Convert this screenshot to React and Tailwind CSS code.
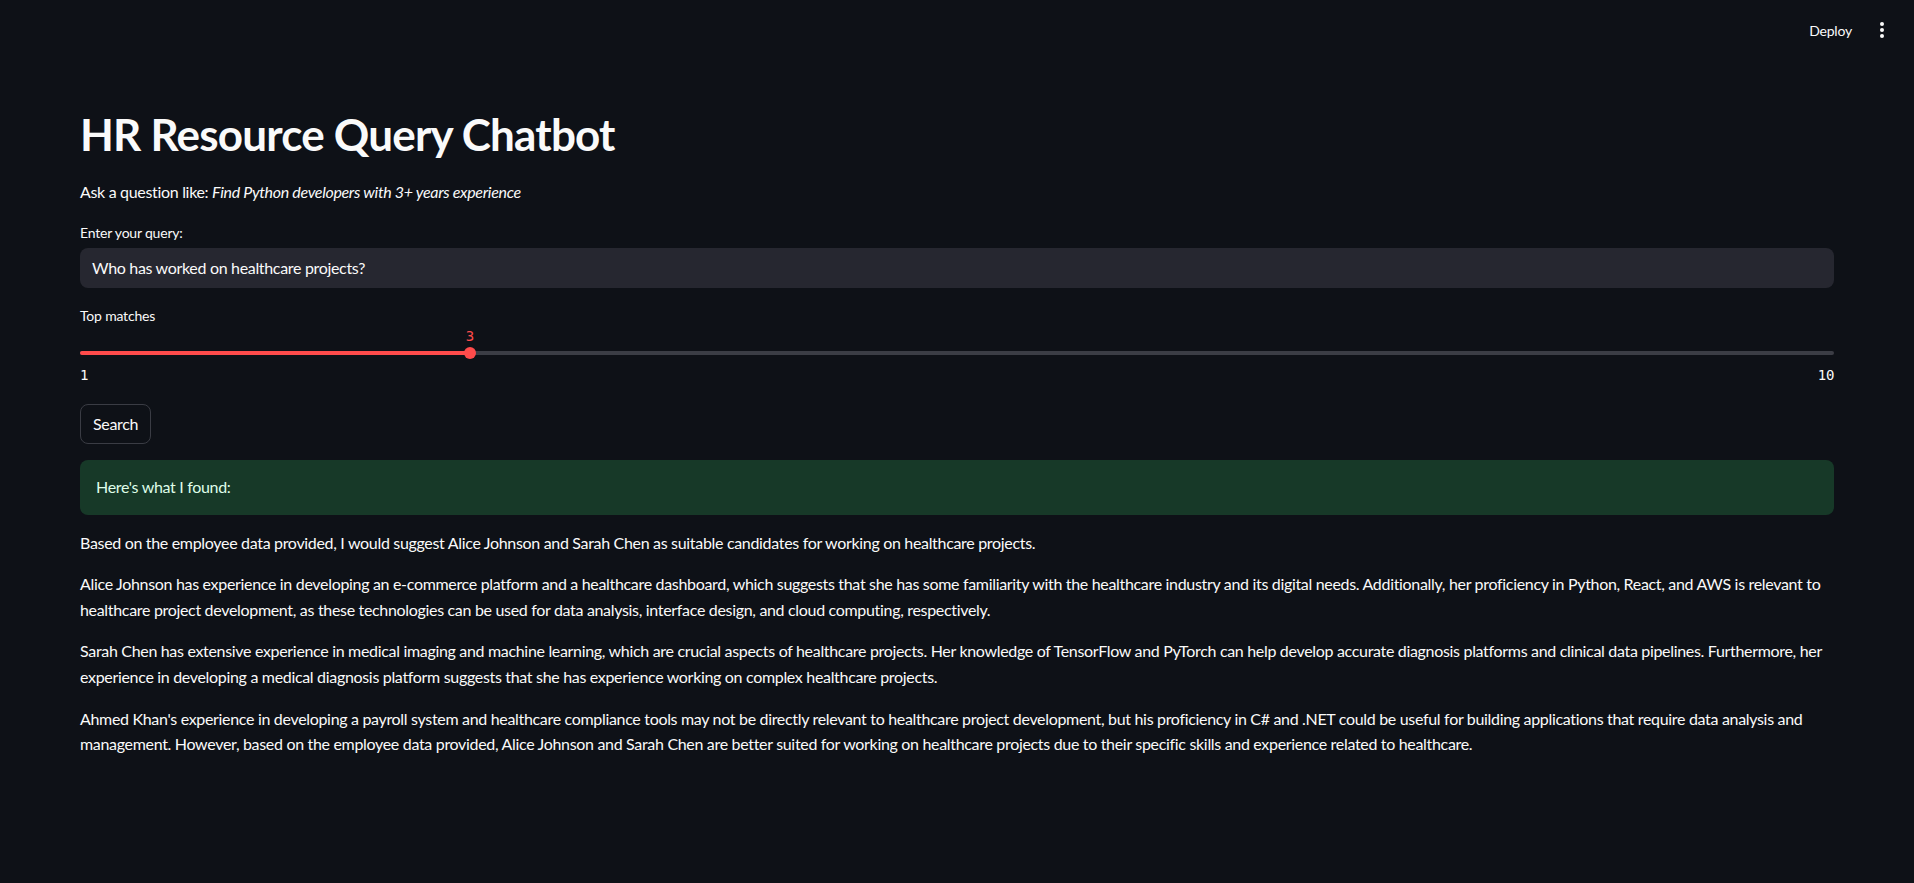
import React from "react";

const paragraphs = [
  "Based on the employee data provided, I would suggest Alice Johnson and Sarah Chen as suitable candidates for working on healthcare projects.",
  "Alice Johnson has experience in developing an e-commerce platform and a healthcare dashboard, which suggests that she has some familiarity with the healthcare industry and its digital needs. Additionally, her proficiency in Python, React, and AWS is relevant to healthcare project development, as these technologies can be used for data analysis, interface design, and cloud computing, respectively.",
  "Sarah Chen has extensive experience in medical imaging and machine learning, which are crucial aspects of healthcare projects. Her knowledge of TensorFlow and PyTorch can help develop accurate diagnosis platforms and clinical data pipelines. Furthermore, her experience in developing a medical diagnosis platform suggests that she has experience working on complex healthcare projects.",
  "Ahmed Khan's experience in developing a payroll system and healthcare compliance tools may not be directly relevant to healthcare project development, but his proficiency in C# and .NET could be useful for building applications that require data analysis and management. However, based on the employee data provided, Alice Johnson and Sarah Chen are better suited for working on healthcare projects due to their specific skills and experience related to healthcare.",
];

function Slider({ min, max, value }) {
  const pct = ((value - min) / (max - min)) * 100;
  return (
    <div>
      <div className="relative h-[21px]">
        <span
          className="absolute top-0 -translate-x-1/2 text-[14px] leading-[21px] text-[#ff4b4b] font-['DejaVu_Sans_Mono',monospace]"
          style={{ left: `${pct}%` }}
        >
          {value}
        </span>
      </div>
      <div className="relative h-[12px] flex items-center">
        <div className="w-full h-[4px] rounded-full bg-[#3b3d45]" />
        <div
          className="absolute left-0 h-[4px] rounded-full bg-[#ff4b4b]"
          style={{ width: `${pct}%` }}
        />
        <div
          className="absolute w-[12px] h-[12px] -translate-x-1/2 rounded-full bg-[#ff4b4b]"
          style={{ left: `${pct}%` }}
        />
      </div>
      <div className="flex justify-between mt-[6px] text-[14px] leading-[21px] text-[#fafafa] font-['DejaVu_Sans_Mono',monospace]">
        <span>{min}</span>
        <span>{max}</span>
      </div>
    </div>
  );
}

export default function App() {
  return (
    <div className="min-h-screen bg-[#0e1117] text-[#fafafa] font-['Lato',sans-serif] tracking-[-0.32px]">
      <header className="h-[60px] flex items-center justify-end pr-[24px] gap-[14px]">
        <button className="text-[14px] text-[#fafafa] px-[8px] tracking-[-0.2px]">Deploy</button>
        <div className="flex flex-col gap-[2px] items-center w-[16px]">
          <span className="w-[4px] h-[4px] rounded-full bg-[#fafafa]" />
          <span className="w-[4px] h-[4px] rounded-full bg-[#fafafa]" />
          <span className="w-[4px] h-[4px] rounded-full bg-[#fafafa]" />
        </div>
      </header>

      <main className="px-[80px] pt-[48px]">
        <h1 className="text-[44px] leading-[53px] font-bold tracking-[-0.8px]">HR Resource Query Chatbot</h1>

        <p className="mt-[18px] text-[16px] leading-[25.6px]">
          Ask a question like: <em>Find Python developers with 3+ years experience</em>
        </p>

        <label className="block mt-[17px] text-[14px] leading-[21px] tracking-[-0.2px]">Enter your query:</label>
        <div className="mt-[5px] h-[40px] rounded-[8px] bg-[#262730] flex items-center px-[12px] text-[16px]">
          Who has worked on healthcare projects?
        </div>

        <div className="mt-[17px] text-[14px] leading-[21px] tracking-[-0.2px]">Top matches</div>
        <Slider min={1} max={10} value={3} />

        <button className="mt-[18px] h-[40px] px-[12px] rounded-[8px] border border-[#3a3c44] bg-[#0e1117] text-[16px] text-[#fafafa]">
          Search
        </button>

        <div className="mt-[16px] h-[55px] rounded-[8px] bg-[#173928] flex items-center px-[16px] text-[16px] text-[#dffde9]">
          Here's what I found:
        </div>

        <div className="mt-[15px]">
          {paragraphs.map((t, i) => (
            <p key={i} className="text-[16px] leading-[25.6px] mb-[16px]">
              {t}
            </p>
          ))}
        </div>
      </main>
    </div>
  );
}
